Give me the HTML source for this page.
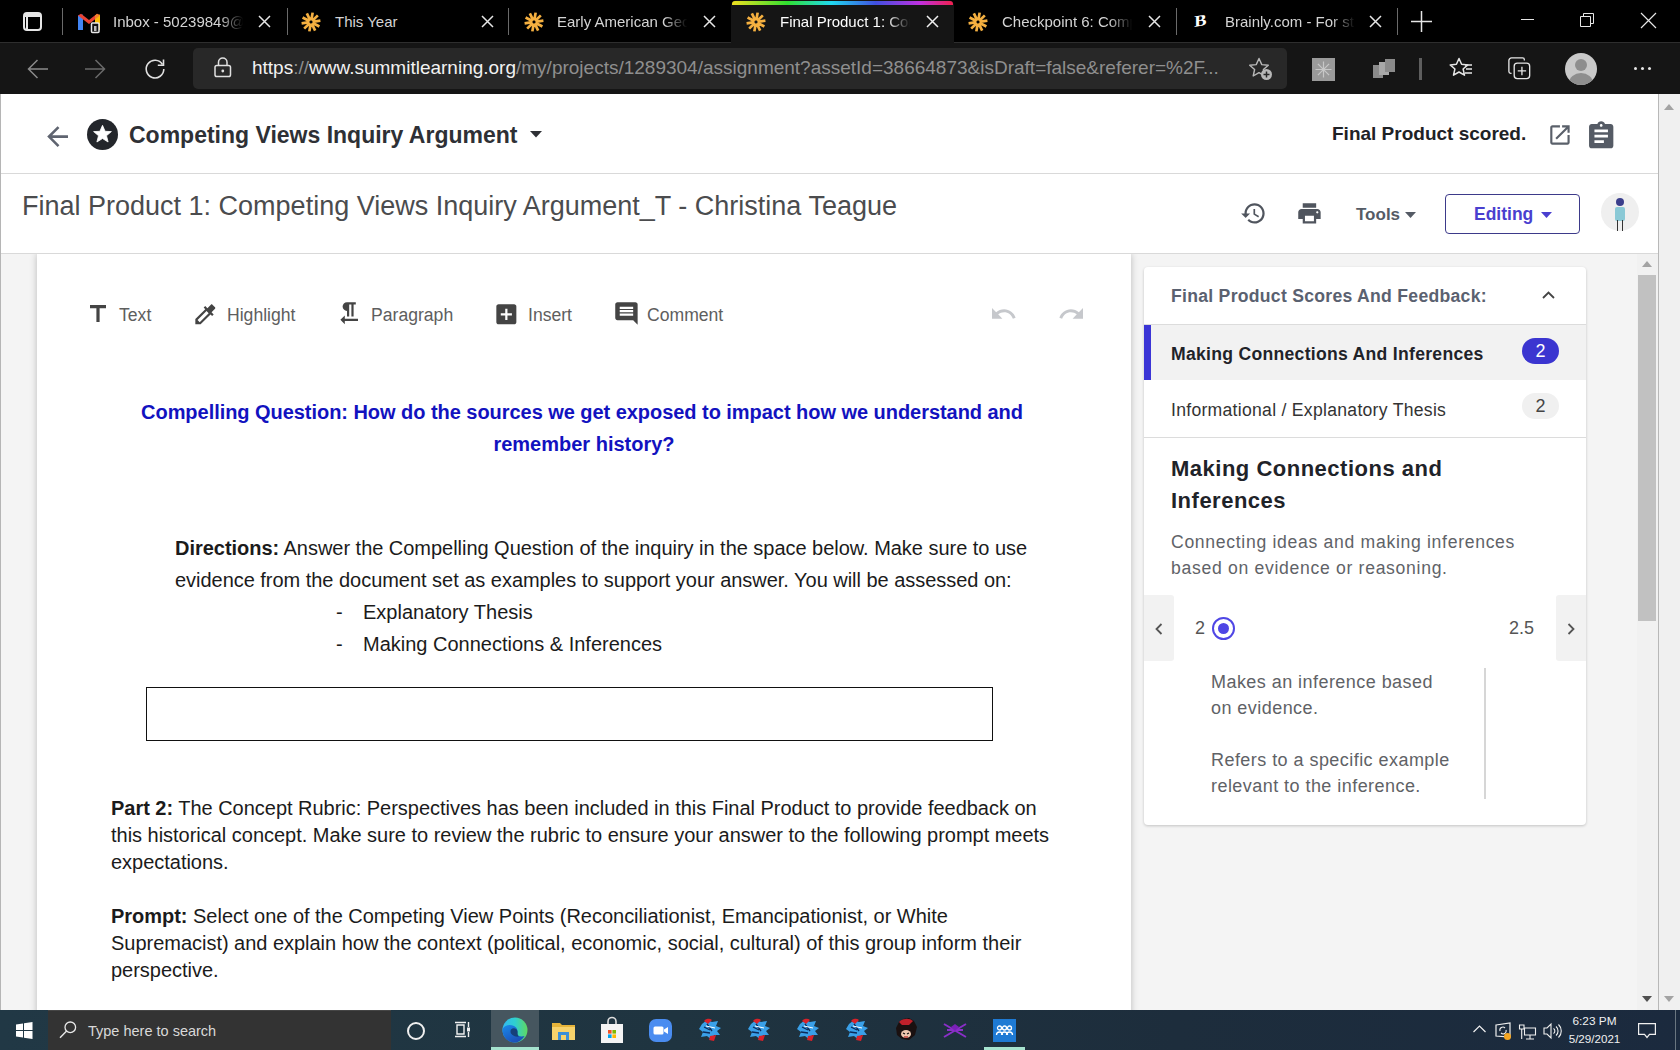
<!DOCTYPE html>
<html><head><meta charset="utf-8">
<style>
*{box-sizing:border-box;margin:0;padding:0}
html,body{width:1680px;height:1050px;overflow:hidden;background:#fff;font-family:"Liberation Sans",sans-serif}
.a{position:absolute}
.nw{white-space:nowrap}
svg{position:absolute;overflow:visible}
#tabs{left:0;top:0;width:1680px;height:43px;background:#000;border-bottom:1px solid #2e2e2e}
.tt{color:#d4d4d4;font-size:15px;top:13px}
.sep{width:1px;height:27px;top:8px;background:#6a6a6a}
#addr{left:0;top:43px;width:1680px;height:51px;background:#151515}
#hdr{left:0;top:94px;width:1658px;height:80px;background:#fff;border-bottom:1px solid #d9d9d9}
#hdr2{left:0;top:174px;width:1658px;height:80px;background:#fff;border-bottom:1px solid #d9d9d9}
#content{left:0;top:254px;width:1658px;height:756px;background:#f4f4f4;overflow:hidden}
#doc{left:37px;top:0;width:1094px;height:800px;background:#fff;box-shadow:0 0 7px rgba(0,0,0,.24)}
.tb{top:50.5px;font-size:17.6px;color:#5e5e5e;line-height:20px}
.rp{font-size:17.6px;letter-spacing:0.28px;line-height:20px}
#task{left:0;top:1010px;width:1680px;height:40px;background:#1f3541}
</style></head><body>

<!-- TAB BAR -->
<div id="tabs" class="a">
  <!-- sidebar icon -->
  <div class="a" style="left:23px;top:12px;width:19px;height:19px;border:2px solid #e6e6e6;border-radius:4px"></div>
  <div class="a" style="left:25px;top:14px;width:15px;height:3px;background:#e6e6e6"></div>
  <div class="a" style="left:26px;top:16px;width:2px;height:13px;background:#e6e6e6"></div>
  <div class="a sep" style="left:62px"></div>
  <!-- tab1 gmail -->
  <svg style="left:78px;top:13px" width="22" height="20" viewBox="0 0 22 20"><path d="M0 2.5L5 1.5V17H0Z" fill="#4285f4"/><path d="M0 2.5L11 11L22 2.5L19 0.8L11 7L3 0.8Z" fill="#ea4335"/><path d="M17 2.5L22 1.5V17H17Z" fill="#fbbc04"/><path d="M19 0.8L22 2.5L17 6.5V3Z" fill="#f08030"/><rect x="13.5" y="10" width="7.5" height="9.5" fill="#111" stroke="#e8e8e8" stroke-width="1.5" rx="1"/><rect x="16" y="13" width="2.5" height="5" fill="#bbb"/></svg>
  <div class="a nw tt" style="left:113px;width:133px;overflow:hidden;-webkit-mask-image:linear-gradient(90deg,#000 80%,transparent 98%)">Inbox - 50239849@gmail</div>
  <svg style="left:258px;top:15px" width="13" height="13"><path d="M1 1L12 12M12 1L1 12" stroke="#e6e6e6" stroke-width="1.5"/></svg>
  <div class="a sep" style="left:287px"></div>
  <!-- tab2 -->
  <svg class="ast" style="left:300px;top:11px" width="22" height="22" viewBox="-11 -11 22 22"><g stroke="#f5b040" stroke-width="2.7" stroke-linecap="butt"><path d="M0.26 -1.48L1.65 -9.36M1.08 -1.04L6.83 -6.60M1.49 -0.21L9.41 -1.32M1.32 0.70L8.39 4.46M0.66 1.35L4.16 8.54M-0.26 1.48L-1.65 9.36M-1.08 1.04L-6.83 6.60M-1.49 0.21L-9.41 1.32M-1.32 -0.70L-8.39 -4.46M-0.66 -1.35L-4.16 -8.54"/></g></svg>
  <div class="a nw tt" style="left:335px">This Year</div>
  <svg style="left:481px;top:15px" width="13" height="13"><path d="M1 1L12 12M12 1L1 12" stroke="#e6e6e6" stroke-width="1.5"/></svg>
  <div class="a sep" style="left:508px"></div>
  <!-- tab3 -->
  <svg style="left:523px;top:11px" width="22" height="22" viewBox="-11 -11 22 22"><g stroke="#f5b040" stroke-width="2.7" stroke-linecap="butt"><path d="M0.26 -1.48L1.65 -9.36M1.08 -1.04L6.83 -6.60M1.49 -0.21L9.41 -1.32M1.32 0.70L8.39 4.46M0.66 1.35L4.16 8.54M-0.26 1.48L-1.65 9.36M-1.08 1.04L-6.83 6.60M-1.49 0.21L-9.41 1.32M-1.32 -0.70L-8.39 -4.46M-0.66 -1.35L-4.16 -8.54"/></g></svg>
  <div class="a nw tt" style="left:557px;width:133px;overflow:hidden;-webkit-mask-image:linear-gradient(90deg,#000 80%,transparent 98%)">Early American Geography</div>
  <svg style="left:703px;top:15px" width="13" height="13"><path d="M1 1L12 12M12 1L1 12" stroke="#e6e6e6" stroke-width="1.5"/></svg>
  <!-- active tab -->
  <div class="a" style="left:731px;top:0;width:223px;height:43px;background:#151515;border-radius:6px 6px 0 0"></div>
  <div class="a" style="left:732px;top:1px;width:221px;height:4px;border-radius:3px 3px 0 0;background:linear-gradient(90deg,#f0e020,#30e030 25%,#20d8f0 45%,#4050e0 65%,#c030e0 85%,#f02050)"></div>
  <svg style="left:745px;top:11px" width="22" height="22" viewBox="-11 -11 22 22"><g stroke="#f5b040" stroke-width="2.7" stroke-linecap="butt"><path d="M0.26 -1.48L1.65 -9.36M1.08 -1.04L6.83 -6.60M1.49 -0.21L9.41 -1.32M1.32 0.70L8.39 4.46M0.66 1.35L4.16 8.54M-0.26 1.48L-1.65 9.36M-1.08 1.04L-6.83 6.60M-1.49 0.21L-9.41 1.32M-1.32 -0.70L-8.39 -4.46M-0.66 -1.35L-4.16 -8.54"/></g></svg>
  <div class="a nw tt" style="left:780px;width:133px;overflow:hidden;color:#fff;-webkit-mask-image:linear-gradient(90deg,#000 80%,transparent 98%)">Final Product 1: Competing</div>
  <svg style="left:926px;top:15px" width="13" height="13"><path d="M1 1L12 12M12 1L1 12" stroke="#f0f0f0" stroke-width="1.5"/></svg>
  <!-- tab5 -->
  <svg style="left:967px;top:11px" width="22" height="22" viewBox="-11 -11 22 22"><g stroke="#f5b040" stroke-width="2.7" stroke-linecap="butt"><path d="M0.26 -1.48L1.65 -9.36M1.08 -1.04L6.83 -6.60M1.49 -0.21L9.41 -1.32M1.32 0.70L8.39 4.46M0.66 1.35L4.16 8.54M-0.26 1.48L-1.65 9.36M-1.08 1.04L-6.83 6.60M-1.49 0.21L-9.41 1.32M-1.32 -0.70L-8.39 -4.46M-0.66 -1.35L-4.16 -8.54"/></g></svg>
  <div class="a nw tt" style="left:1002px;width:133px;overflow:hidden;-webkit-mask-image:linear-gradient(90deg,#000 80%,transparent 98%)">Checkpoint 6: Competing</div>
  <svg style="left:1148px;top:15px" width="13" height="13"><path d="M1 1L12 12M12 1L1 12" stroke="#e6e6e6" stroke-width="1.5"/></svg>
  <div class="a sep" style="left:1176px"></div>
  <!-- tab6 brainly -->
  <div class="a nw" style="left:1195px;top:12px;font:bold 16px 'Liberation Serif',serif;color:#fff;transform:skewY(-10deg) scaleX(1.15)">B</div>
  <div class="a nw tt" style="left:1225px;width:133px;overflow:hidden;-webkit-mask-image:linear-gradient(90deg,#000 80%,transparent 98%)">Brainly.com - For students</div>
  <svg style="left:1369px;top:15px" width="13" height="13"><path d="M1 1L12 12M12 1L1 12" stroke="#e6e6e6" stroke-width="1.5"/></svg>
  <div class="a sep" style="left:1397px"></div>
  <svg style="left:1411px;top:11px" width="21" height="21"><path d="M10.5 0V21M0 10.5H21" stroke="#e6e6e6" stroke-width="1.5"/></svg>
  <!-- window controls -->
  <div class="a" style="left:1521px;top:19px;width:13px;height:1px;background:#e6e6e6"></div>
  <svg style="left:1580px;top:13px" width="14" height="14"><path d="M0.5 3.5H10.5V13.5H0.5Z M3.5 3.5V0.5H13.5V10.5H10.5" stroke="#e6e6e6" fill="none"/></svg>
  <svg style="left:1641px;top:13px" width="15" height="15"><path d="M0 0L15 15M15 0L0 15" stroke="#e6e6e6" stroke-width="1.2"/></svg>
</div>

<!-- ADDRESS BAR -->
<div id="addr" class="a">
  <svg style="left:27px;top:16px" width="22" height="20"><path d="M21 10H1.5M10.5 1L1.5 10L10.5 19" stroke="#8a8a8a" stroke-width="1.5" fill="none"/></svg>
  <svg style="left:85px;top:16px" width="22" height="20"><path d="M0 10H19.5M10.5 1L19.5 10L10.5 19" stroke="#6a6a6a" stroke-width="1.5" fill="none"/></svg>
  <svg style="left:144px;top:15px" width="22" height="22" viewBox="0 0 22 22"><path d="M18.5 6.5A8.8 8.8 0 1 0 19.8 11" stroke="#e0e0e0" stroke-width="1.6" fill="none"/><path d="M19.5 1.5V7.2H13.8" stroke="#e0e0e0" stroke-width="1.6" fill="none"/></svg>
  <div class="a" style="left:193px;top:5px;width:1094px;height:41px;background:#282828;border-radius:5px"></div>
  <svg style="left:214px;top:14px" width="18" height="21" viewBox="0 0 18 21"><rect x="1" y="8.5" width="15.5" height="11" rx="1.8" stroke="#e0e0e0" stroke-width="1.5" fill="none"/><path d="M4.5 8.5V5.2A4.2 4.2 0 0 1 13 5.2V8.5" stroke="#e0e0e0" stroke-width="1.5" fill="none"/><circle cx="8.8" cy="14" r="1.4" fill="#e0e0e0"/></svg>
  <div class="a nw" style="left:252px;top:14px;font-size:19px;color:#8f8f8f;letter-spacing:0"><span style="color:#f2f2f2">https</span>://<span style="color:#f2f2f2">www.summitlearning.org</span>/my/projects/1289304/assignment?assetId=38664873&amp;isDraft=false&amp;referer=%2F...</div>
  <svg style="left:1248px;top:14px" width="26" height="24" viewBox="0 0 26 24"><path d="M11 1.5L13.8 7.6L20.3 8.2L15.4 12.5L16.8 19L11 15.6L5.2 19L6.6 12.5L1.7 8.2L8.2 7.6Z" stroke="#b8b8b8" stroke-width="1.4" fill="none" stroke-linejoin="round"/><circle cx="18.5" cy="17.5" r="5.5" fill="#b8b8b8"/><path d="M18.5 14.5V20.5M15.5 17.5H21.5" stroke="#282828" stroke-width="1.5"/></svg>
  <div class="a" style="left:1312px;top:15px;width:23px;height:23px;background:#9a9a9a"></div>
  <svg style="left:1312px;top:15px" width="23" height="23" viewBox="-11.5 -11.5 23 23"><g stroke="#c8c8c8" stroke-width="1.2"><path d="M0 -8V8M-8 0H8M-5.6 -5.6L5.6 5.6M5.6 -5.6L-5.6 5.6"/></g></svg>
  <svg style="left:1372px;top:15px" width="24" height="22" viewBox="0 0 24 22"><rect x="1" y="7" width="10" height="13" fill="#8a8a8a"/><rect x="7" y="4" width="10" height="13" fill="#a8a8a8"/><rect x="13" y="1" width="10" height="13" fill="#8a8a8a"/></svg>
  <div class="a" style="left:1419px;top:15px;width:3px;height:22px;background:#5e5e5e"></div>
  <svg style="left:1449px;top:14px" width="26" height="24" viewBox="0 0 26 24"><path d="M10 1.5L12.6 7.3L18.8 7.9L14.1 12L15.5 18.2L10 15L4.5 18.2L5.9 12L1.2 7.9L7.4 7.3Z" stroke="#e6e6e6" stroke-width="1.5" fill="none" stroke-linejoin="round"/><path d="M16 8H23M17 12H23M16 16H23" stroke="#e6e6e6" stroke-width="1.5"/></svg>
  <svg style="left:1508px;top:14px" width="23" height="23" viewBox="0 0 26 26"><path d="M4 18.5H3A2 2 0 0 1 1 16.5V4A3 3 0 0 1 4 1H16.5A2 2 0 0 1 18.5 3V4" stroke="#e6e6e6" stroke-width="1.5" fill="none"/><rect x="7" y="7" width="17.5" height="17.5" rx="3.5" stroke="#e6e6e6" stroke-width="1.5" fill="none"/><path d="M15.75 11V20.5M11 15.75H20.5" stroke="#e6e6e6" stroke-width="1.5"/></svg>
  <div class="a" style="left:1565px;top:10px;width:32px;height:32px;border-radius:50%;background:#c9c9c9;overflow:hidden">
    <div class="a" style="left:10px;top:6px;width:12px;height:12px;border-radius:50%;background:#8e8e8e"></div>
    <div class="a" style="left:4px;top:20px;width:24px;height:20px;border-radius:50%;background:#8e8e8e"></div>
  </div>
  <div class="a" style="left:1634px;top:24px;width:3px;height:3px;border-radius:50%;background:#e6e6e6;box-shadow:7px 0 #e6e6e6,14px 0 #e6e6e6"></div>
</div>

<!-- HEADER -->
<div id="hdr" class="a">
  <svg style="left:41.8px;top:26.8px" width="31.2" height="31.2" viewBox="0 0 24 24"><path d="M20 11H7.83l5.59-5.59L12 4l-8 8 8 8 1.41-1.41L7.83 13H20v-2z" fill="#5f6470"/></svg>
  <div class="a" style="left:87px;top:25px;width:31px;height:31px;border-radius:50%;background:#23262b"></div>
  <svg style="left:87px;top:25px" width="31" height="31" viewBox="0 0 31 31"><path d="M15.5 6.3L18.1 12.3L24.4 12.6L19.5 16.7L21.1 23L15.5 19.5L9.9 23L11.5 16.7L6.6 12.6L12.9 12.3Z" fill="#fff" stroke="#fff" stroke-width="0.8" stroke-linejoin="round"/></svg>
  <div class="a nw" style="left:129px;top:28px;font-size:23px;font-weight:bold;color:#2e3035">Competing Views Inquiry Argument</div>
  <svg style="left:530px;top:37px" width="12" height="7"><path d="M0 0H12L6 6.5Z" fill="#2e3035"/></svg>
  <div class="a nw" style="left:1332px;top:29px;font-size:19px;font-weight:bold;color:#1f2226">Final Product scored.</div>
  <svg style="left:1546.5px;top:27.6px" width="25.9" height="25.9" viewBox="0 0 24 24"><path d="M19 19H5V5h7V3H5c-1.11 0-2 .9-2 2v14c0 1.1.89 2 2 2h14c1.1 0 2-.9 2-2v-7h-2v7zM14 3v2h3.59l-9.83 9.83 1.41 1.41L19 6.41V10h2V3h-7z" fill="#5a606a"/></svg>
  <svg style="left:1585.0px;top:26.0px" width="32.4" height="32.4" viewBox="0 0 24 24"><path d="M19 3h-4.18C14.4 1.840 13.3 1 12 1c-1.3 0-2.4.84-2.82 2H5c-1.1 0-2 .9-2 2v14c0 1.1.9 2 2 2h14c1.1 0 2-.9 2-2V5c0-1.1-.9-2-2-2zm-7 0c.55 0 1 .45 1 1s-.45 1-1 1-1-.45-1-1 .45-1 1-1zm2 14H7v-2h7v2zm3-4H7v-2h10v2zm0-4H7V7h10v2z" fill="#555b65"/></svg>
</div>
<div id="hdr2" class="a">
  <div class="a nw" style="left:22px;top:17px;font-size:27px;color:#4b4c4e">Final Product 1: Competing Views Inquiry Argument_T - Christina Teague</div>
  <svg style="left:1240.4px;top:25.6px" width="26.9" height="26.9" viewBox="0 0 24 24"><path d="M13 3c-4.97 0-9 4.030-9 9H1l3.89 3.89.07.14L9 12H6c0-3.87 3.13-7 7-7s7 3.13 7 7-3.13 7-7 7c-1.930 0-3.68-.79-4.94-2.06l-1.42 1.42C8.27 19.99 10.51 21 13 21c4.97 0 9-4.03 9-9s-4.03-9-9-9zm-1 5v5l4.28 2.54.72-1.21-3.5-2.08V8H12z" fill="#50555e"/></svg>
  <svg style="left:1296.4px;top:26.1px" width="26.9" height="26.9" viewBox="0 0 24 24"><path d="M19 8H5c-1.66 0-3 1.34-3 3v6h4v4h12v-4h4v-6c0-1.66-1.34-3-3-3zm-3 11H8v-5h8v5zm3-7c-.55 0-1-.45-1-1s.45-1 1-1 1 .45 1 1-.45 1-1 1zm-1-9H6v4h12V3z" fill="#50555e"/></svg>
  <div class="a nw" style="left:1356px;top:31px;font-size:17px;font-weight:bold;color:#555b65">Tools</div>
  <svg style="left:1405px;top:38px" width="11" height="6"><path d="M0 0H11L5.5 6Z" fill="#555b65"/></svg>
  <div class="a" style="left:1445px;top:20px;width:135px;height:40px;border:1.3px solid #3d3a8a;border-radius:4px"></div>
  <div class="a nw" style="left:1474px;top:30px;font-size:17.5px;font-weight:bold;color:#4a3fcf">Editing</div>
  <svg style="left:1541px;top:38px" width="11" height="6"><path d="M0 0H11L5.5 6Z" fill="#4a3fcf"/></svg>
  <div class="a" style="left:1601px;top:19px;width:38px;height:38px;border-radius:50%;background:#efefef"></div>
  <div class="a" style="left:1616px;top:24px;width:8px;height:8px;border-radius:50%;background:#3b3f8c"></div>
  <div class="a" style="left:1615px;top:33px;width:10px;height:14px;border-radius:2px;background:#8ac9d6"></div>
  <div class="a" style="left:1617px;top:46px;width:1.3px;height:11px;background:#333"></div>
  <div class="a" style="left:1621.5px;top:46px;width:1.3px;height:11px;background:#333"></div>
</div>

<!-- CONTENT -->
<div id="content" class="a">
  <div class="a" style="left:0;top:0;width:1px;height:756px;background:#b5b5b5"></div>
  <div id="doc" class="a">
    <!-- toolbar -->
    <svg style="left:53px;top:51px" width="16" height="17" viewBox="0 0 16 17"><path d="M0 0H16V3.2H9.6V17H6.4V3.2H0Z" fill="#444"/></svg>
    <div class="a nw tb" style="left:82px">Text</div>
  <svg style="left:154.7px;top:46.5px" width="26.7" height="26.7" viewBox="0 0 24 24"><path d="M20.71 5.63l-2.34-2.34c-.39-.39-1.02-.39-1.41 0l-3.12 3.12-1.93-1.91-1.41 1.41 1.42 1.42L3 16.25V21h4.75l8.92-8.92 1.42 1.42 1.41-1.41-1.92-1.92 3.12-3.12c.4-.4.4-1.03.01-1.42zM6.92 19L5 17.08l8.06-8.06 1.92 1.92L6.92 19z" fill="#444"/></svg>
    <div class="a nw tb" style="left:190px">Highlight</div>
  <svg style="left:298.6px;top:45.8px" width="26.4" height="26.4" viewBox="0 0 24 24"><path d="M10 10v5h2V4h2v11h2V4h2V2h-8C7.79 2 6 3.79 6 6s1.79 4 4 4zm-2 7v-3l-4 4 4 4v-3h12v-2H8z" fill="#444"/></svg>
    <div class="a nw tb" style="left:334px">Paragraph</div>
  <svg style="left:455.7px;top:46.5px" width="26.7" height="26.7" viewBox="0 0 24 24"><path d="M19 3H5c-1.11 0-2 .9-2 2v14c0 1.1.89 2 2 2h14c1.1 0 2-.9 2-2V5c0-1.1-.9-2-2-2zm-2 10h-4v4h-2v-4H7v-2h4V7h2v4h4v2z" fill="#444"/></svg>
    <div class="a nw tb" style="left:491px">Insert</div>
  <svg style="left:575.6px;top:45.8px" width="26.9" height="26.9" viewBox="0 0 24 24"><path d="M21.99 4c0-1.1-.89-2-1.99-2H4c-1.1 0-2 .9-2 2v12c0 1.1.9 2 2 2h14l4 4-.01-18zM18 14H6v-2h12v2zm0-3H6V9h12v2zm0-3H6V6h12v2z" fill="#444"/></svg>
    <div class="a nw tb" style="left:610px">Comment</div>
    <svg style="left:955px;top:54px" width="24" height="11" viewBox="2 7 20.8 9.3" preserveAspectRatio="none"><path d="M12.5 8c-2.65 0-5.05.99-6.9 2.6L2 7v9h9l-3.62-3.62c1.39-1.16 3.16-1.88 5.12-1.88 3.54 0 6.55 2.31 7.6 5.5l2.37-.78C21.08 11.03 17.15 8 12.5 8z" fill="#c6c8cc"/></svg>
    <svg style="left:1022px;top:54px" width="24" height="11" viewBox="1.2 7 20.8 9.3" preserveAspectRatio="none"><g transform="translate(24 0) scale(-1 1)"><path d="M12.5 8c-2.65 0-5.05.99-6.9 2.6L2 7v9h9l-3.62-3.62c1.39-1.16 3.16-1.88 5.12-1.88 3.54 0 6.55 2.31 7.6 5.5l2.37-.78C21.08 11.03 17.15 8 12.5 8z" fill="#c6c8cc"/></g></svg>
    <!-- body -->
    <div class="a nw" style="left:0;width:1094px;text-align:center;top:142px;font-size:20px;font-weight:bold;color:#1212bf;line-height:32px;padding-left:0">
      <div style="position:relative;left:-2px;letter-spacing:-0.044px">Compelling Question: How do the sources we get exposed to impact how we understand and</div>
      <div style="position:relative;left:0px">remember history?</div>
    </div>
    <div class="a nw" style="left:138px;top:278px;font-size:20px;color:#1b1b1b;line-height:32px;letter-spacing:-0.03px">
      <div><b>Directions:</b> Answer the Compelling Question of the inquiry in the space below. Make sure to use</div>
      <div>evidence from the document set as examples to support your answer. You will be assessed on:</div>
    </div>
    <div class="a nw" style="left:299px;top:342px;font-size:20px;color:#1b1b1b;line-height:32px">-</div>
    <div class="a nw" style="left:299px;top:374px;font-size:20px;color:#1b1b1b;line-height:32px">-</div>
    <div class="a nw" style="left:326px;top:342px;font-size:20px;color:#1b1b1b;line-height:32px">Explanatory Thesis<br>Making Connections &amp; Inferences</div>
    <div class="a" style="left:109px;top:433px;width:847px;height:54px;border:1.5px solid #111"></div>
    <div class="a nw" style="left:74px;top:541px;font-size:20px;color:#1b1b1b;line-height:27px;letter-spacing:-0.022px">
      <div><b>Part 2:</b> The Concept Rubric: Perspectives has been included in this Final Product to provide feedback on</div>
      <div>this historical concept. Make sure to review the rubric to ensure your answer to the following prompt meets</div>
      <div>expectations.</div>
      <div>&nbsp;</div>
      <div><b>Prompt:</b> Select one of the Competing View Points (Reconciliationist, Emancipationist, or White</div>
      <div>Supremacist) and explain how the context (political, economic, social, cultural) of this group inform their</div>
      <div>perspective.</div>
    </div>
  </div>
  <!-- right card -->
  <div class="a" style="left:1144px;top:13px;width:442px;height:558px;background:#fff;border-radius:4px;box-shadow:0 1px 3px rgba(0,0,0,.2)">
    <div class="a nw rp" style="left:27px;top:19px;font-weight:bold;color:#5a6170">Final Product Scores And Feedback:</div>
    <svg style="left:398px;top:24px" width="13" height="8"><path d="M1 7L6.5 1.5L12 7" stroke="#444" stroke-width="1.8" fill="none"/></svg>
    <div class="a" style="left:0;top:57px;width:442px;height:1px;background:#dcdcdc"></div>
    <div class="a" style="left:0;top:58px;width:442px;height:55px;background:#f2f2f2"></div>
    <div class="a" style="left:0;top:58px;width:7px;height:55px;background:#3b35d6"></div>
    <div class="a nw rp" style="left:27px;top:77px;font-weight:bold;color:#1f2329">Making Connections And Inferences</div>
    <div class="a" style="left:378px;top:71px;width:37px;height:26px;border-radius:13px;background:#3b35d0;color:#fff;font-size:18px;text-align:center;line-height:26px">2</div>
    <div class="a nw rp" style="left:27px;top:133px;color:#333">Informational / Explanatory Thesis</div>
    <div class="a" style="left:378px;top:126px;width:37px;height:26px;border-radius:13px;background:#f0f0f0;color:#444;font-size:18px;text-align:center;line-height:26px">2</div>
    <div class="a" style="left:0;top:170px;width:442px;height:1px;background:#dcdcdc"></div>
    <div class="a nw" style="left:27px;top:186px;font-size:22px;font-weight:bold;color:#1f2329;letter-spacing:0.5px;line-height:32px">Making Connections and<br>Inferences</div>
    <div class="a nw" style="left:27px;top:262px;font-size:17.6px;color:#5f6368;letter-spacing:0.69px;line-height:26px">Connecting ideas and making inferences<br>based on evidence or reasoning.</div>
    <div class="a" style="left:0;top:328px;width:30px;height:66px;background:#f2f2f2;border-radius:0 3px 3px 0"></div>
    <svg style="left:11px;top:356px" width="8" height="12"><path d="M6.5 1L1.5 6L6.5 11" stroke="#555" stroke-width="1.8" fill="none"/></svg>
    <div class="a" style="left:412px;top:328px;width:30px;height:66px;background:#f2f2f2;border-radius:3px 0 0 3px"></div>
    <svg style="left:423px;top:356px" width="8" height="12"><path d="M1.5 1L6.5 6L1.5 11" stroke="#555" stroke-width="1.8" fill="none"/></svg>
    <div class="a nw" style="left:51px;top:351px;font-size:18px;color:#555">2</div>
    <div class="a" style="left:68px;top:350px;width:23px;height:23px;border-radius:50%;border:2.2px solid #4f46e5"></div>
    <div class="a" style="left:74px;top:356px;width:11px;height:11px;border-radius:50%;background:#4f46e5"></div>
    <div class="a nw" style="left:365px;top:351px;font-size:18px;color:#555">2.5</div>
    <div class="a nw" style="left:67px;top:402px;font-size:18px;color:#606266;letter-spacing:0.45px;line-height:26px">Makes an inference based<br>on evidence.<br><br>Refers to a specific example<br>relevant to the inference.</div>
    <div class="a" style="left:340px;top:401px;width:2px;height:131px;background:#d6d6d6"></div>
  </div>
  <!-- inner scrollbar -->
  <div class="a" style="left:1637px;top:0;width:21px;height:756px;background:#f1f1f1"></div>
  <div class="a" style="left:1638px;top:21px;width:18px;height:346px;background:#c1c1c1"></div>
  <svg style="left:1642px;top:7px" width="10" height="6"><path d="M0 6L5 0L10 6Z" fill="#a3a3a3"/></svg>
  <svg style="left:1642px;top:742px" width="10" height="6"><path d="M0 0L5 6L10 0Z" fill="#505050"/></svg>
</div>
<div class="a" style="left:0;top:94px;width:1px;height:916px;background:#b5b5b5"></div>
<!-- outer scrollbar -->
<div class="a" style="left:1658px;top:94px;width:22px;height:916px;background:#f0f0f0;border-left:1px solid #b8b8b8"></div>
<svg style="left:1664px;top:104px" width="10" height="6"><path d="M0 6L5 0L10 6Z" fill="#a3a3a3"/></svg>
<svg style="left:1664px;top:996px" width="10" height="6"><path d="M0 0L5 6L10 0Z" fill="#a3a3a3"/></svg>

<!-- TASKBAR -->
<div id="task" class="a">
  <div class="a" style="left:0;top:0;width:1680px;height:40px;background:linear-gradient(90deg,#213845 0%,#1f3440 40%,#1d2d3c 70%,#1b2a3e 100%)"></div>
  <svg style="left:16px;top:12px" width="17" height="17" viewBox="0 0 17 17"><path d="M0 2.4L7 1.4V8H0Z M8 1.2L16.5 0V8H8Z M0 9H7V15.6L0 14.6Z M8 9H16.5V17L8 15.8Z" fill="#fff"/></svg>
  <div class="a" style="left:48px;top:0;width:343px;height:40px;background:#333;border-top:1px solid #454545"></div>
  <svg style="left:59px;top:11px" width="18" height="18" viewBox="0 0 18 18"><circle cx="11.3" cy="6.3" r="5.3" stroke="#e8e8e8" stroke-width="1.3" fill="none"/><path d="M7.6 10L1 16.8" stroke="#e8e8e8" stroke-width="1.4"/></svg>
  <div class="a nw" style="left:88px;top:12.5px;font-size:14.5px;color:#d9d9d9">Type here to search</div>
  <div class="a" style="left:407px;top:12px;width:18px;height:18px;border-radius:50%;border:2px solid #f0f0f0"></div>
  <svg style="left:455px;top:11px" width="17" height="17" viewBox="0 0 17 17"><path d="M0 1.5H11M0 15.5H11M2 4H9V13H2Z" stroke="#f0f0f0" stroke-width="1.4" fill="none"/><path d="M13.5 1V6M13.5 11V16" stroke="#f0f0f0" stroke-width="1.4"/><rect x="12" y="6.5" width="3" height="4" fill="#f0f0f0"/></svg>
  <div class="a" style="left:491px;top:0;width:48px;height:40px;background:#46565f"></div>
  <div class="a" style="left:491px;top:37px;width:48px;height:3px;background:#a6e3cf"></div>
  <svg style="left:502px;top:7px" width="26" height="26" viewBox="0 0 26 26"><defs><linearGradient id="eg1" x1="0" y1="0" x2="1" y2="0"><stop offset="0" stop-color="#33b8f0"/><stop offset="0.5" stop-color="#2fcfd0"/><stop offset="1" stop-color="#5fd860"/></linearGradient><linearGradient id="eg2" x1="0" y1="0" x2="0.6" y2="1"><stop offset="0" stop-color="#1a8ae8"/><stop offset="1" stop-color="#1c4fb8"/></linearGradient></defs><circle cx="13" cy="13" r="12.5" fill="url(#eg1)"/><path d="M0.8 11.5C3 8 8 7 12 9C15 10.5 16 13 15 16C14 19 19 20 22.5 19C20 23 16.5 25.5 13 25.5C6 25.5 0.5 20 0.5 13Z" fill="url(#eg2)"/><path d="M9 12.5C11 10.5 14.5 11 15.5 14C16 16 15 18 17 19.5C14 20 10.5 19 9 16.5C8.3 15 8.4 13.5 9 12.5Z" fill="#16407a"/></svg>
  <svg style="left:552px;top:11px" width="23" height="19" viewBox="0 0 23 19"><path d="M0 2H8L10 4H23V19H0Z" fill="#e6b43a"/><path d="M0 6H23V19H0Z" fill="#f7d26b"/><rect x="6" y="11" width="11" height="8" fill="#3b8fd8"/><rect x="9" y="14" width="5" height="5" fill="#f7d26b"/></svg>
  <svg style="left:601px;top:8px" width="22" height="25" viewBox="0 0 22 25"><path d="M7 6V3.5A4 4 0 0 1 15 3.5V6" stroke="#ddd" stroke-width="1.6" fill="none"/><rect x="0" y="6" width="22" height="19" fill="#f4f4f4"/><rect x="7" y="12" width="3.6" height="3.6" fill="#f25022"/><rect x="11.4" y="12" width="3.6" height="3.6" fill="#7fba00"/><rect x="7" y="16.4" width="3.6" height="3.6" fill="#00a4ef"/><rect x="11.4" y="16.4" width="3.6" height="3.6" fill="#ffb900"/></svg>
  <svg style="left:649px;top:9px" width="23" height="23" viewBox="0 0 23 23"><rect x="0" y="0" width="23" height="23" rx="7" fill="#4a8cf0"/><rect x="4.5" y="7.5" width="10" height="8" rx="1.5" fill="#fff"/><path d="M15 10.5L19 8V15L15 12.5Z" fill="#fff"/></svg>
  <svg style="left:698px;top:8px" width="24" height="24" viewBox="0 0 24 24"><path d="M4 6L9 2L14 4L20 3L18 8L23 10L19 13L22 17L16 17L14 22L9 18L3 19L5 14L1 11Z" fill="#3aa0e8"/><path d="M6 3A5 4 0 0 1 14 2L10 6Z" fill="#d8222a"/><path d="M12 18L18 17L16 23L11 22Z" fill="#d8222a"/><path d="M6 9L12 12M9 6L14 13M5 14L12 15" stroke="#0c2a5a" stroke-width="1.3"/><path d="M8 8L17 10" stroke="#fff" stroke-width="1"/></svg><svg style="left:747px;top:8px" width="24" height="24" viewBox="0 0 24 24"><path d="M4 6L9 2L14 4L20 3L18 8L23 10L19 13L22 17L16 17L14 22L9 18L3 19L5 14L1 11Z" fill="#3aa0e8"/><path d="M6 3A5 4 0 0 1 14 2L10 6Z" fill="#d8222a"/><path d="M12 18L18 17L16 23L11 22Z" fill="#d8222a"/><path d="M6 9L12 12M9 6L14 13M5 14L12 15" stroke="#0c2a5a" stroke-width="1.3"/><path d="M8 8L17 10" stroke="#fff" stroke-width="1"/></svg><svg style="left:796px;top:8px" width="24" height="24" viewBox="0 0 24 24"><path d="M4 6L9 2L14 4L20 3L18 8L23 10L19 13L22 17L16 17L14 22L9 18L3 19L5 14L1 11Z" fill="#3aa0e8"/><path d="M6 3A5 4 0 0 1 14 2L10 6Z" fill="#d8222a"/><path d="M12 18L18 17L16 23L11 22Z" fill="#d8222a"/><path d="M6 9L12 12M9 6L14 13M5 14L12 15" stroke="#0c2a5a" stroke-width="1.3"/><path d="M8 8L17 10" stroke="#fff" stroke-width="1"/></svg><svg style="left:845px;top:8px" width="24" height="24" viewBox="0 0 24 24"><path d="M4 6L9 2L14 4L20 3L18 8L23 10L19 13L22 17L16 17L14 22L9 18L3 19L5 14L1 11Z" fill="#3aa0e8"/><path d="M6 3A5 4 0 0 1 14 2L10 6Z" fill="#d8222a"/><path d="M12 18L18 17L16 23L11 22Z" fill="#d8222a"/><path d="M6 9L12 12M9 6L14 13M5 14L12 15" stroke="#0c2a5a" stroke-width="1.3"/><path d="M8 8L17 10" stroke="#fff" stroke-width="1"/></svg>
  <svg style="left:894px;top:8px" width="24" height="25" viewBox="0 0 24 25"><path d="M2 10L5 4L9 1L15 0L20 3L23 9L21 17L15 22L8 21L3 17Z" fill="#1a1010"/><path d="M5 4A8 5 0 0 1 19 3L15 7L8 7Z" fill="#c0202a"/><ellipse cx="12" cy="16" rx="5" ry="4" fill="#f0c8b0"/><path d="M9 15L11 16M15 15L13 16" stroke="#111" stroke-width="1.2"/><path d="M10 19H14" stroke="#b02020" stroke-width="1.2"/></svg>
  <svg style="left:943px;top:13px" width="24" height="15" viewBox="0 0 24 15"><path d="M1 1L23 14M23 1L1 14M4 7H20" stroke="#8a2fc8" stroke-width="2"/><path d="M8 4L12 1L16 4L12 8Z" fill="#7a20b8"/></svg>
  <div class="a" style="left:993px;top:9px;width:23px;height:23px;background:#1e7ad4"></div>
  <svg style="left:996px;top:15px" width="17" height="11" viewBox="0 0 17 11"><g fill="none" stroke="#fff" stroke-width="1.3"><circle cx="3.5" cy="3" r="2"/><circle cx="8.5" cy="3" r="2"/><circle cx="13.5" cy="3" r="2"/><path d="M0.5 10A3 3 0 0 1 6.5 10M5.5 10A3 3 0 0 1 11.5 10M10.5 10A3 3 0 0 1 16.5 10"/></g></svg>
  <div class="a" style="left:984px;top:37px;width:41px;height:3px;background:#a6e3cf"></div>
  <svg style="left:1473px;top:15px" width="13" height="8"><path d="M0.5 7L6.5 1L12.5 7" stroke="#f0f0f0" stroke-width="1.2" fill="none"/></svg>
  <svg style="left:1495px;top:12px" width="18" height="18" viewBox="0 0 18 18"><path d="M1 3L15 1V15L1 14Z" stroke="#f0f0f0" stroke-width="1.2" fill="none"/><path d="M5 9A3 3 0 0 1 10 6M11 8A3 3 0 0 1 6 11" stroke="#f0f0f0" stroke-width="1.1" fill="none"/><circle cx="12.5" cy="14.5" r="3.5" fill="#f5a623"/></svg>
  <svg style="left:1519px;top:14px" width="17" height="16" viewBox="0 0 17 16"><path d="M5.5 4H16.5V11H5.5Z M11 11V15M7 15H15M0.5 1H5V5H0.5Z M2.7 5V15" stroke="#f0f0f0" stroke-width="1.1" fill="none"/></svg>
  <svg style="left:1543px;top:13px" width="18" height="16" viewBox="0 0 18 16"><path d="M1 5H4L8 1V15L4 11H1Z" stroke="#f0f0f0" stroke-width="1.1" fill="none"/><path d="M10.5 5.5A3 3 0 0 1 10.5 10.5M13 3.5A6 6 0 0 1 13 12.5M15.5 1.5A9 9 0 0 1 15.5 14.5" stroke="#f0f0f0" stroke-width="1.1" fill="none"/></svg>
  <div class="a nw" style="left:1572px;top:3.5px;font-size:11.8px;color:#f0f0f0;width:45px;text-align:center">6:23 PM</div>
  <div class="a nw" style="left:1567px;top:22px;font-size:11.6px;color:#f0f0f0;width:55px;text-align:center">5/29/2021</div>
  <svg style="left:1638px;top:13px" width="18" height="16" viewBox="0 0 18 16"><path d="M0.6 0.6H17.4V11.4H11.5L9 14.5L6.5 11.4H0.6Z" stroke="#f0f0f0" stroke-width="1.2" fill="none"/></svg>
  <div class="a" style="left:1675px;top:0;width:1px;height:40px;background:#6a7680"></div>
</div>
</body></html>
